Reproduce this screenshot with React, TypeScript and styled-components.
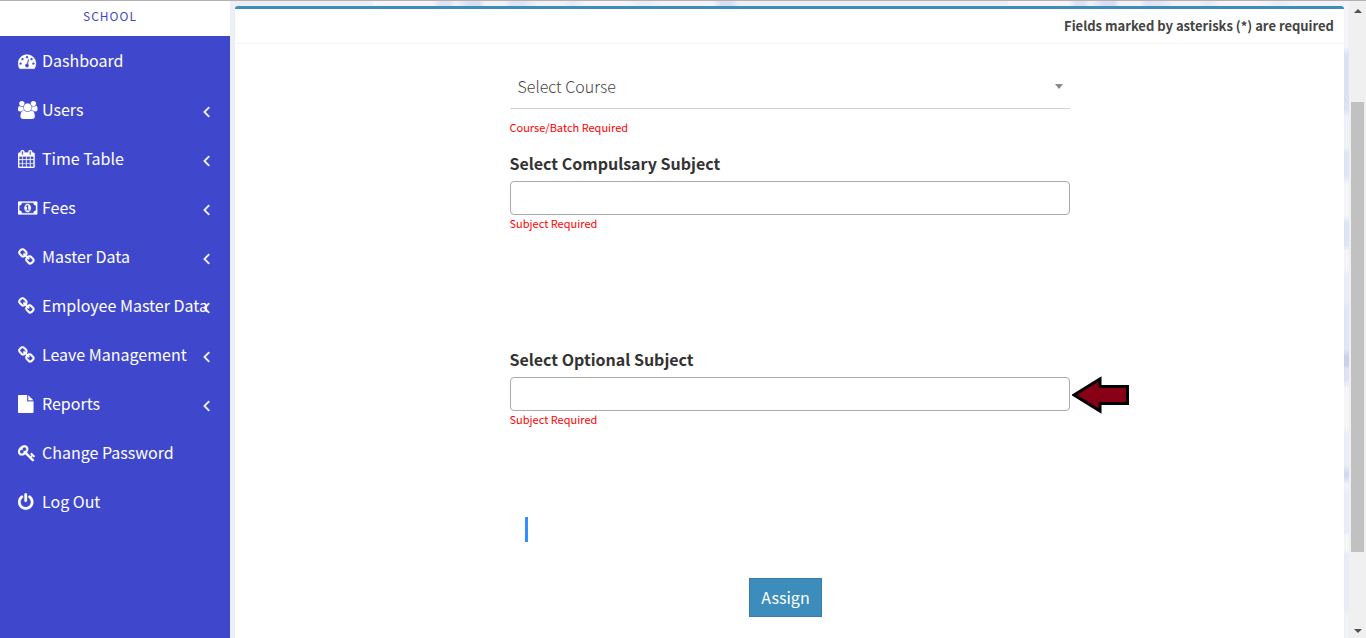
import React from "react";
import styled, { createGlobalStyle } from "styled-components";

const GlobalStyle = createGlobalStyle`
  *, *::before, *::after { box-sizing: border-box; }
  body {
    margin: 0;
    background: #ecf0f5;
    color: #333;
    font-family: "Noto Sans CJK SC", "Noto Sans", sans-serif;
    font-size: 16px;
    line-height: 22px;
  }
`;

const Page = styled.div`
  display: grid;
  grid-template-columns: 230px minmax(0, 1fr) 17px;
  min-height: 100vh;
  border-top: 1px solid #b4b0b4;
`;

const Sidebar = styled.aside`
  background: #3f48cc;
`;

const Brand = styled.div`
  height: 35px;
  padding: 4px 10px 0 0;
  background: #fff;
  color: #3f48cc;
  font-size: 12px;
  letter-spacing: 1px;
  text-align: center;
`;

const Menu = styled.ul`
  margin: 0;
  padding: 0;
  list-style: none;
`;

const MenuLink = styled.a`
  position: relative;
  display: flex;
  align-items: center;
  gap: 4px;
  height: 49px;
  padding-left: 18px;
  color: #fff;
  text-decoration: none;
  white-space: nowrap;
`;

const MenuText = styled.span`
  padding-bottom: 2px;
`;

const MenuIcon = styled.svg`
  flex: none;
  width: 20px;
  height: 18px;
  fill: #fff;
  stroke: #fff;
  stroke-width: 24;
`;

const Chevron = styled.svg`
  position: absolute;
  top: 18px;
  right: 19px;
  width: 8px;
  height: 18px;
  fill: #fff;
  stroke: #fff;
  stroke-width: 50;
`;

const Content = styled.main`
  display: flex;
  padding: 5px 5px 0;
  background:
    linear-gradient(#ecf0f5, #ecf0f5) left / 143px 100% no-repeat,
    linear-gradient(
      90deg,
      #f7f5f9 0 60px, #dde2f2 68px 76px, #f1f1f8 82px, #d8def0 96px 106px, #f3f2f8 112px 132px,
      #dfe4f2 138px 150px, #f2f1f8 164px 190px, #e6e9f5 200px, #f7f5f9 212px 250px, #eaedf6 270px,
      #f3f3f9 290px 340px, #d8dff0 348px 358px, #eef0f7 366px, #ecf0f5 390px 635px
    ) 143px 0 / 635px 5px repeat-x,
    linear-gradient(
      180deg,
      #f4f4f9 0 46px, #dae3f2 54px 108px, #eff3f9 116px 146px, #dde6f3 152px 174px, #f6f7fa 184px 214px,
      #dce5f3 222px 244px, #f4f5f8 250px 266px, #e8eef7 276px 300px, #dfe7f4 308px 348px, #c8d2ea 356px 364px,
      #dde3f2 368px 378px, #f5f6f8 388px 426px, #e8eff6 434px 464px, #ccd6ee 474px, #f2f4f8 484px,
      #e8edf6 494px 530px, #f5f6f8 536px 548px, #e8edf5 554px 608px, #f0f4f8 616px
    );
`;

const Card = styled.section`
  flex: 1;
  min-width: 0;
  background: #fff;
  border-top: 3px solid #3c8dbc;
  border-radius: 3px 3px 0 0;
  box-shadow: 0 1px 1px rgba(0, 0, 0, 0.1);
`;

const CardHeader = styled.header`
  padding: 6px 10px;
  border-bottom: 1px solid #f4f4f4;
  color: #444;
  font-size: 13px;
  font-weight: 700;
  text-align: right;
`;

const Form = styled.form`
  display: flex;
  flex-direction: column;
  width: 100%;
  max-width: 560px;
  margin: 0 auto;
  padding: 21px 0;
`;

const Field = styled.div<{ $space: number }>`
  position: relative;
  display: flex;
  flex-direction: column;
  min-height: ${(p) => p.$space}px;
`;

const Select = styled.select`
  width: 100%;
  height: 44px;
  padding: 0 8px 2px;
  border: 0;
  border-bottom: 1px solid #d2d2d2;
  border-radius: 0;
  background: transparent;
  color: #444;
  font: inherit;
  font-weight: 300;
  appearance: none;
`;

const Caret = styled.svg`
  position: absolute;
  top: 19px;
  right: 7px;
  width: 8px;
  height: 5px;
  fill: #888;
  pointer-events: none;
`;

const Label = styled.label`
  height: 29px;
  font-weight: 700;
`;

const InputRow = styled.div`
  position: relative;
  display: flex;
`;

const TextInput = styled.input`
  flex: 1;
  min-width: 0;
  height: 34px;
  padding: 0 8px;
  border: 1px solid #aaa;
  border-radius: 4px;
  background: #fff;
  font: inherit;
`;

const Pointer = styled.svg`
  position: absolute;
  top: -2px;
  left: calc(100% + 2px);
  width: 58px;
  height: 40px;
`;

const ErrorText = styled.span<{ $gap?: number }>`
  margin-top: ${(p) => p.$gap ?? 0}px;
  color: #f00;
  font-size: 11px;
  line-height: 16px;
`;

const Marker = styled.div`
  width: 3px;
  height: 25px;
  margin: 0 15px 36px;
  background: #338fff;
`;

const Actions = styled.div`
  display: flex;
  justify-content: center;
  padding-right: 8px;
`;

const AssignButton = styled.button`
  height: 39px;
  padding: 0 11px 2px;
  border: 1px solid #367fa9;
  background: #3c8dbc;
  color: #fff;
  font: inherit;
`;

const ScrollTrack = styled.div`
  display: flex;
  flex-direction: column;
  align-items: center;
  justify-content: space-between;
  padding: 8px 0 5px;
  background: #f0f0f0;
`;

const ScrollThumb = styled.div`
  flex: 450 0 0;
  width: 13px;
  margin-top: 89px;
  background: #c1c1c1;
`;

const ScrollSpace = styled.div`
  flex: 77 0 0;
`;

const ScrollArrow = styled.svg`
  flex: none;
  width: 8px;
  height: 4px;
  fill: #505050;
`;

const icons = {
  dashboard: {
    x: 0,
    d: "M384 1152q0-53-37.5-90.5t-90.5-37.5-90.5 37.5-37.5 90.5 37.5 90.5 90.5 37.5 90.5-37.5 37.5-90.5zm192-448q0-53-37.5-90.5t-90.5-37.5-90.5 37.5-37.5 90.5 37.5 90.5 90.5 37.5 90.5-37.5 37.5-90.5zm428 481l101-382q6-26-7.5-48.5t-38.5-29.5-48 6.5-30 39.5l-101 382q-60 5-107 43.5t-63 98.5q-20 77 20 146t117 89 146-20 89-117q16-60-6-117t-72-91zm660-33q0-53-37.5-90.5t-90.5-37.5-90.5 37.5-37.5 90.5 37.5 90.5 90.5 37.5 90.5-37.5 37.5-90.5zm-640-640q0-53-37.5-90.5t-90.5-37.5-90.5 37.5-37.5 90.5 37.5 90.5 90.5 37.5 90.5-37.5 37.5-90.5zm448 192q0-53-37.5-90.5t-90.5-37.5-90.5 37.5-37.5 90.5 37.5 90.5 90.5 37.5 90.5-37.5 37.5-90.5zm320 448q0 261-141 483-19 29-54 29h-1402q-35 0-54-29-141-221-141-483 0-182 71-348t191-286 286-191 348-71 348 71 286 191 191 286 71 348z",
  },
  users: {
    x: 0,
    d: "M593 896q-162 5-265 128h-134q-82 0-138-40.5t-56-118.5q0-353 124-353 6 0 43.5 21t97.5 42.5 119 21.5q67 0 133-23-5 37-5 66 0 159 93 287zm1071 637q0 120-73 189.5t-194 69.5h-874q-121 0-194-69.5t-73-189.5q0-53 3.5-103.5t14-109 26.5-108.5 43-97.5 62-81 85.5-53.5 111.5-20q10 0 43 21.5t73 48 107 48 135 21.5 135-21.5 107-48 73-48 43-21.5q61 0 111.5 20t85.5 53.5 62 81 43 97.5 26.5 108.5 14 109 3.5 103.5zm-1024-1277q0 106-75 181t-181 75-181-75-75-181 75-181 181-75 181 75 75 181zm704 384q0 159-112.5 271.5t-271.5 112.5-271.5-112.5-112.5-271.5 112.5-271.5 271.5-112.5 271.5 112.5 112.5 271.5zm576 225q0 78-56 118.5t-138 40.5h-134q-103-123-265-128 93-128 93-287 0-29-5-66 66 23 133 23 59 0 119-21.5t97.5-42.5 43.5-21q124 0 124 353zm-128-609q0 106-75 181t-181 75-181-75-75-181 75-181 181-75 181 75 75 181z",
  },
  calendar: {
    x: 64,
    d: "M192 1664h288v-288h-288v288zm352 0h320v-288h-320v288zm-352-352h288v-320h-288v320zm352 0h320v-320h-320v320zm-352-384h288v-288h-288v288zm736 736h320v-288h-320v288zm-384-736h320v-288h-320v288zm768 736h288v-288h-288v288zm-384-352h320v-320h-320v320zm-352-864v-288q0-13-9.5-22.5t-22.5-9.5h-64q-13 0-22.5 9.5t-9.5 22.5v288q0 13 9.5 22.5t22.5 9.5h64q13 0 22.5-9.5t9.5-22.5zm736 864h288v-320h-288v320zm-384-384h320v-288h-320v288zm384 0h288v-288h-288v288zm32-480v-288q0-13-9.5-22.5t-22.5-9.5h-64q-13 0-22.5 9.5t-9.5 22.5v288q0 13 9.5 22.5t22.5 9.5h64q13 0 22.5-9.5t9.5-22.5zm384-64v1280q0 52-38 90t-90 38h-1408q-52 0-90-38t-38-90v-1280q0-52 38-90t90-38h128v-96q0-66 47-113t113-47h64q66 0 113 47t47 113v96h384v-96q0-66 47-113t113-47h64q66 0 113 47t47 113v96h128q52 0 90 38t38 90z",
  },
  money: {
    x: 0,
    d: "M768 1152h384v-96h-128v-448h-114l-148 137 77 80q42-37 55-57h2v288h-128v96zm512-256q0 70-21 142t-59.5 134-101.5 101-138 39-138-39-101.5-101-59.5-134-21-142 21-142 59.5-134 101.5-101 138-39 138 39 101.5 101 59.5 134 21 142zm512 256v-512q-106 0-181-75t-75-181h-1152q0 106-75 181t-181 75v512q106 0 181 75t75 181h1152q0-106 75-181t181-75zm128-832v1152q0 26-19 45t-45 19h-1792q-26 0-45-19t-19-45v-1152q0-26 19-45t45-19h1792q26 0 45 19t19 45z",
  },
  chain: {
    x: 64,
    d: "M1520 1216q0-40-28-68l-208-208q-28-28-68-28-42 0-72 32 3 3 19 18.5t21.5 21.5 15 19 13 25.5 3.5 27.5q0 40-28 68t-68 28q-15 0-27.5-3.5t-25.5-13-19-15-21.5-21.5-18.5-19q-33 31-33 73 0 40 28 68l206 207q27 27 68 27 40 0 68-26l147-146q28-28 28-67zm-703-705q0-40-28-68l-206-207q-28-28-68-28-39 0-68 27l-147 146q-28 28-28 67 0 40 28 68l208 208q27 27 68 27 42 0 72-31-3-3-19-18.5t-21.5-21.5-15-19-13-25.5-3.5-27.5q0-40 28-68t68-28q15 0 27.5 3.5t25.5 13 19 15 21.5 21.5 18.5 19q33-31 33-73zm895 705q0 120-85 203l-147 146q-83 83-203 83-121 0-204-85l-206-207q-83-83-83-203 0-123 88-209l-88-88q-86 88-208 88-120 0-204-84l-208-208q-84-84-84-204t85-203l147-146q83-83 203-83 121 0 204 85l206 207q83 83 83 203 0 123-88 209l88 88q86-88 208-88 120 0 204 84l208 208q84 84 84 204z",
  },
  file: {
    x: 128,
    d: "M1152 512v-472q22 14 36 28l408 408q14 14 28 36h-472zm-128 32q0 40 28 68t68 28h544v1056q0 40-28 68t-68 28h-1344q-40 0-68-28t-28-68v-1600q0-40 28-68t68-28h800v544z",
  },
  key: {
    x: 0,
    d: "M832 512q0-80-56-136t-136-56-136 56-56 136q0 42 19 83-41-19-83-19-80 0-136 56t-56 136 56 136 136 56 136-56 56-136q0-42-19-83 41 19 83 19 80 0 136-56t56-136zm851 704q0 17-49 66t-66 49q-9 0-28.5-16t-36.5-33-38.5-40-24.5-26l-96 96 220 220q28 28 28 68 0 42-39 81t-81 39q-40 0-68-28l-671-671q-176 131-365 131-163 0-265.5-102.5t-102.5-265.5q0-160 95-313t248-248 313-95q163 0 265.5 102.5t102.5 265.5q0 189-131 365l355 355 96-96q-3-3-26-24.5t-40-38.5-33-36.5-16-28.5q0-17 49-66t66-49q13 0 23 10 6 6 46 44.5t82 79.5 86.5 86 73 78 28.5 41z",
  },
  power: {
    x: 128,
    d: "M1664 896q0 156-61 298t-164 245-245 164-298 61-298-61-245-164-164-245-61-298q0-182 80.5-343t226.5-270q43-32 95.5-25t83.5 50q32 42 24.5 94.5t-49.5 84.5q-98 74-151.5 181t-53.5 228q0 104 40.5 198.5t109.5 163.5 163.5 109.5 198.5 40.5 198.5-40.5 163.5-109.5 109.5-163.5 40.5-198.5q0-121-53.5-228t-151.5-181q-42-32-49.5-84.5t24.5-94.5q31-43 84-50t95 25q146 109 226.5 270t80.5 343zm-640-768v640q0 52-38 90t-90 38-90-38-38-90v-640q0-52 38-90t90-38 90 38 38 90z",
  },
};

type IconName = keyof typeof icons;

const menu: { icon: IconName; text: string; sub?: boolean }[] = [
  { icon: "dashboard", text: "Dashboard" },
  { icon: "users", text: "Users", sub: true },
  { icon: "calendar", text: "Time Table", sub: true },
  { icon: "money", text: "Fees", sub: true },
  { icon: "chain", text: "Master Data", sub: true },
  { icon: "chain", text: "Employee Master Data", sub: true },
  { icon: "chain", text: "Leave Management", sub: true },
  { icon: "file", text: "Reports", sub: true },
  { icon: "key", text: "Change Password" },
  { icon: "power", text: "Log Out" },
];

export default function App() {
  return (
    <>
      <GlobalStyle />
      <Page>
        <Sidebar>
          <Brand>SCHOOL</Brand>
          <nav>
            <Menu>
              {menu.map((item) => (
                <li key={item.text}>
                  <MenuLink href="#">
                    <MenuIcon viewBox={`${icons[item.icon].x} 0 1991 1792`} aria-hidden="true">
                      <path d={icons[item.icon].d} />
                    </MenuIcon>
                    <MenuText>{item.text}</MenuText>
                    {item.sub && (
                      <Chevron viewBox="560 64 796 1792" aria-hidden="true">
                        <path d="M1203 544q0 13-10 23l-393 393 393 393q10 10 10 23t-10 23l-50 50q-10 10-23 10t-23-10l-466-466q-10-10-10-23t10-23l466-466q10-10 23-10t23 10l50 50q10 10 10 23z" />
                      </Chevron>
                    )}
                  </MenuLink>
                </li>
              ))}
            </Menu>
          </nav>
        </Sidebar>

        <Content>
          <Card>
            <CardHeader>Fields marked by asterisks (*) are required</CardHeader>
            <Form>
              <Field $space={87}>
                <Select aria-label="Select Course" defaultValue="">
                  <option value="">Select Course</option>
                </Select>
                <Caret viewBox="0 0 8 5" aria-hidden="true">
                  <path d="M0 0h8L4 5z" />
                </Caret>
                <ErrorText $gap={10}>Course/Batch Required</ErrorText>
              </Field>

              <Field $space={196}>
                <Label htmlFor="compulsory">Select Compulsary Subject</Label>
                <InputRow>
                  <TextInput id="compulsory" type="text" />
                </InputRow>
                <ErrorText>Subject Required</ErrorText>
              </Field>

              <Field $space={169}>
                <Label htmlFor="optional">Select Optional Subject</Label>
                <InputRow>
                  <TextInput id="optional" type="text" />
                  <Pointer viewBox="0 0 58 40" aria-hidden="true">
                    <path
                      d="M2 20 28 4V11.500H55.500V28.500H28V36z"
                      fill="#880015"
                      stroke="#000"
                      strokeWidth="3"
                    />
                  </Pointer>
                </InputRow>
                <ErrorText>Subject Required</ErrorText>
              </Field>

              <Marker />
              <Actions>
                <AssignButton type="button">Assign</AssignButton>
              </Actions>
            </Form>
          </Card>
        </Content>

        <ScrollTrack aria-hidden="true">
          <ScrollArrow viewBox="0 0 8 4">
            <path d="M0 4h8L4 0z" />
          </ScrollArrow>
          <ScrollThumb />
          <ScrollSpace />
          <ScrollArrow viewBox="0 0 8 4">
            <path d="M0 0h8L4 4z" />
          </ScrollArrow>
        </ScrollTrack>
      </Page>
    </>
  );
}
